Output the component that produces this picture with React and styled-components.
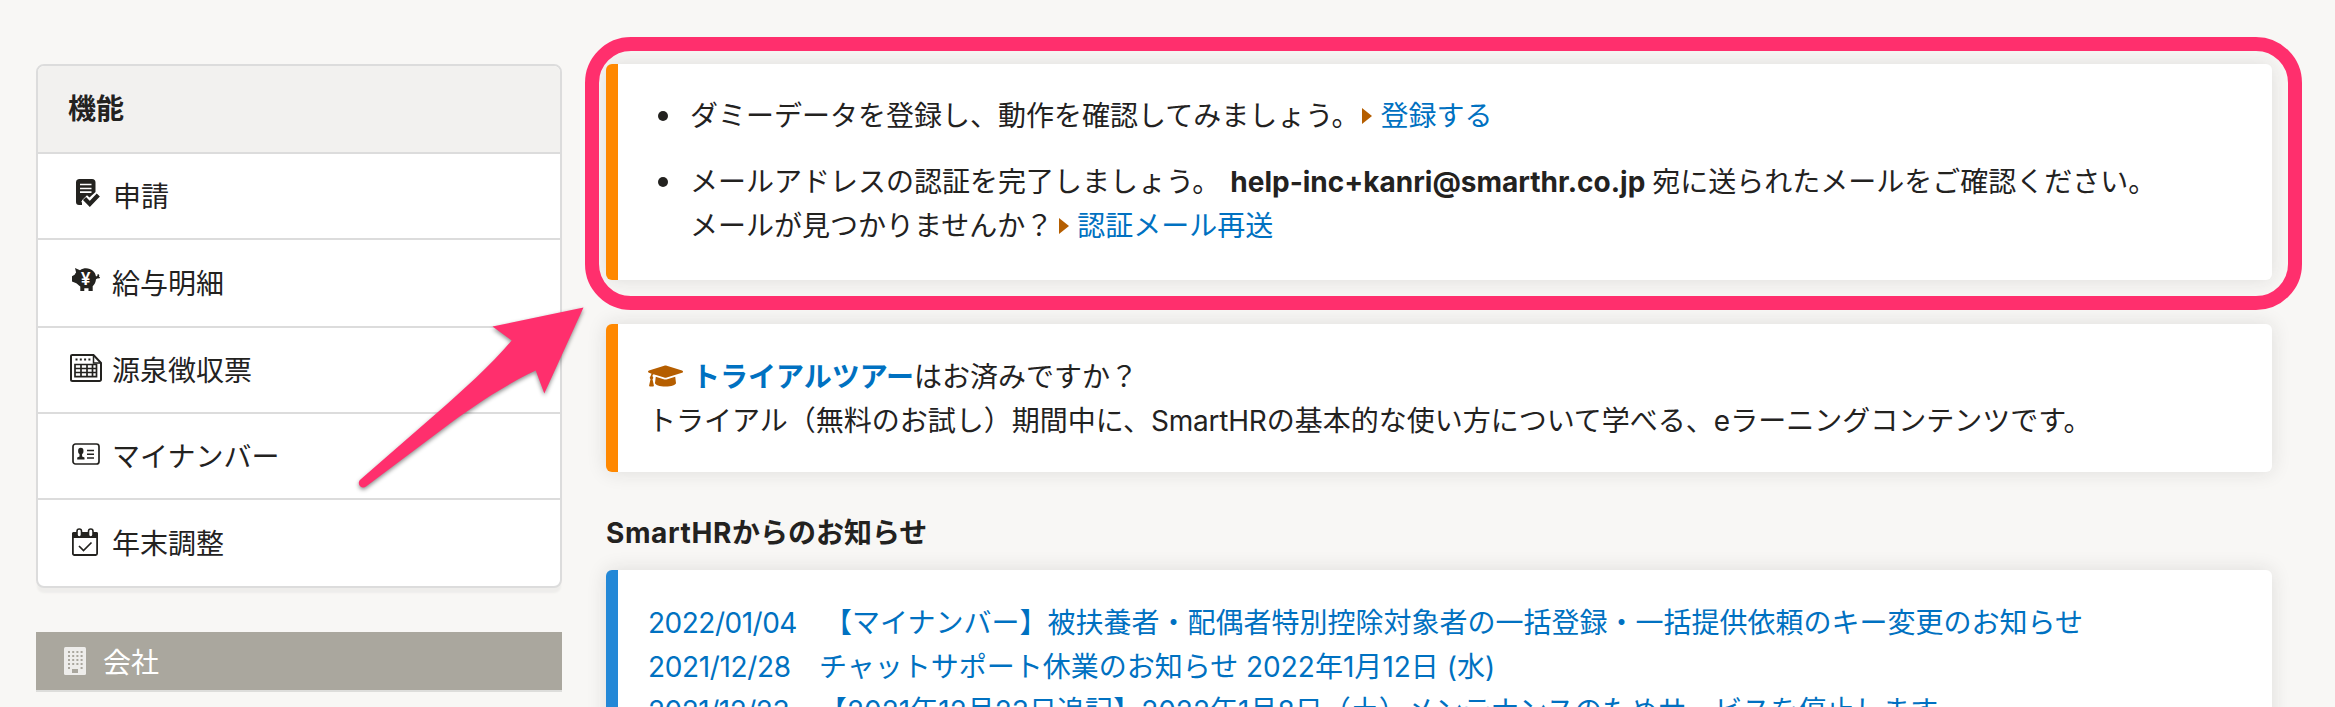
import React from 'react';
import styled, { createGlobalStyle } from 'styled-components';
import { FaGraduationCap } from 'react-icons/fa';

const GlobalStyle = createGlobalStyle`
  * { box-sizing: border-box; }
  body {
    margin: 0;
    background: #f8f7f5;
    color: #23221f;
    font-family: "Noto Sans CJK JP", sans-serif;
    font-size: 28px;
    line-height: 44px;
  }
`;

const Page = styled.div`
  position: relative;
  display: flex;
  gap: 44px;
  width: 2335px;
  height: 707px;
  padding: 64px 63px 0 36px;
  overflow: hidden;
`;

const Sidebar = styled.aside`
  display: flex;
  flex-direction: column;
  gap: 44px;
  width: 526px;
  flex: none;
`;

const Menu = styled.nav`
  border: 2px solid #dcdcdc;
  border-radius: 8px;
  background: #fff;
  box-shadow: 0 6px 2px -1px #eeedeb;
  overflow: hidden;
`;

const MenuTitle = styled.h2`
  display: flex;
  align-items: center;
  height: 86px;
  margin: 0;
  padding: 0 30px 5px;
  background: #f2f1ef;
  font-size: 28px;
  font-weight: 700;
`;

const MenuItem = styled.a`
  display: flex;
  align-items: center;
  height: ${(p) => p.$height}px;
  padding: 0 0 2px 32px;
  border-top: 2px solid #dcdcdc;
`;

const MenuIcon = styled.span`
  display: flex;
  width: ${(p) => p.$width || 42}px;
  margin-bottom: ${(p) => p.$lift || 0}px;
  flex: none;

  svg { display: block; overflow: visible; }
`;

const CompanyBar = styled.div`
  display: flex;
  align-items: center;
  height: 60px;
  padding-left: 28px;
  border-bottom: 2px solid #dddddb;
  background: #aaa79e;
  color: #fff;
`;

const CompanyIcon = styled.svg`
  margin-right: 17px;
`;

const Main = styled.main`
  display: flex;
  flex-direction: column;
  flex: 1;
  min-width: 0;
  height: 720px;
`;

const Card = styled.section`
  position: relative;
  flex: none;
  height: ${(p) => p.$height}px;
  margin-bottom: ${(p) => p.$after || 0}px;
  padding: ${(p) => p.$top}px 30px 0;
  border-left: 12px solid ${(p) => p.$accent};
  border-radius: 6px;
  background: #fff;
  box-shadow: 0 0 20px rgba(35, 34, 31, 0.12);
  white-space: nowrap;
`;

const Highlight = styled.div`
  position: absolute;
  top: -27px;
  left: -33px;
  width: 1717px;
  height: 273px;
  border: 14px solid #ff2f6d;
  border-radius: 46px;
  z-index: 2;
`;

const TaskList = styled.ul`
  display: flex;
  flex-direction: column;
  gap: 22px;
  margin: 0;
  padding: 0;
  list-style: none;
`;

const Task = styled.li`
  display: flex;

  &::before {
    content: '';
    flex: none;
    width: 10px;
    height: 10px;
    margin: 19px 22px 0 10px;
    border-radius: 50%;
    background: #23221f;
  }
`;

const Line = styled.div`
  height: 44px;
`;

const Link = styled.a`
  color: #0071c1;
  font-weight: ${(p) => (p.$bold ? 700 : 400)};
`;

const Caret = styled.span`
  display: inline-block;
  margin: 0 ${(p) => p.$after}px 0 ${(p) => p.$before}px;
  border-left: 10px solid #b55e00;
  border-top: 8px solid transparent;
  border-bottom: 8px solid transparent;
  vertical-align: 2px;
`;

const Latin = styled.span`
  font-family: Inter, sans-serif;
  line-height: 1;
  font-weight: ${(p) => p.$weight || 400};
  letter-spacing: ${(p) => p.$track || 0}px;
`;

const Email = styled(Latin)`
  margin: 0 7px 0 10px;
`;

const Cap = styled(FaGraduationCap)`
  width: 35px;
  height: 28px;
  margin-right: 9px;
  color: #b55e00;
  vertical-align: -3px;
`;

const SectionTitle = styled.h2`
  flex: none;
  height: 44px;
  margin: 0 0 17px;
  font-size: 28px;
  font-weight: 700;
`;

const News = styled.a`
  display: flex;
  align-items: baseline;
  height: 44px;
  color: #0071c1;
  white-space: pre;
`;

const NewsDate = styled(Latin)`
  width: ${(p) => p.$width}px;
  flex: none;
`;

const Pointer = styled.svg`
  position: absolute;
  top: 296px;
  left: 350px;
  z-index: 3;
  filter: drop-shadow(0 2px 2px rgba(0, 0, 0, 0.45));
`;

const INK = '#23221f';

const RequestIcon = () => (
  <svg width="32" height="30" viewBox="0 0 32 30">
    <path fill={INK} d="M9 0h13a3.500 3.500 0 0 1 3.500 3.500V13l-6 5.500-2.500-2.200-5 5V26H9a3 3 0 0 1-3-3V3.500A3.500 3.500 0 0 1 9 0z" />
    <path d="M10 5.500h11.500M10 9.500h11.500M10 13.200h11.500" stroke="#fff" strokeWidth="1.700" />
    <path d="M14 20l6 6 9.500-10" fill="none" stroke="#fff" strokeWidth="8" />
    <path d="M14.500 19.500l5.300 5.500 8.500-9" fill="none" stroke={INK} strokeWidth="4.300" />
  </svg>
);

const PiggyIcon = () => (
  <svg width="32" height="24" viewBox="0 0 32 24">
    <path fill={INK} d="M5 0l5 2.200C12 .8 14 .2 16 .2c5.500 0 9.500 3.800 10 8.300l1.500-.8c-.6-1 .5-2 1.400-1.100.6.8.4 1.500 0 2.100l1.200.6-.5 1-2.300.1-1.300.8c-.2 2.800-1.500 5.400-3.300 7V23h-4.200v-2.700h-4.200V23h-4v-4.500C8.500 17 7 15.800 6.300 15.200L2 13.500V8.300l2.600-1.500c.4-1 .9-1.700 1.500-2.400z" />
    <text x="15.700" y="17.200" fill="#fff" fontFamily="Inter, sans-serif" fontSize="17.500" fontWeight="600" textAnchor="middle">¥</text>
  </svg>
);

const SheetIcon = () => (
  <svg width="32" height="28" viewBox="0 0 32 28" fill="none" stroke={INK}>
    <path d="M1.500 1h22l7.500 8v16.500a1.500 1.500 0 0 1-1.500 1.500H2.500A1.500 1.500 0 0 1 1 25.500V2a1 1 0 0 1 1-1z" strokeWidth="2" />
    <path d="M23.500 1v8h7.500" strokeWidth="1.500" />
    <path d="M5.500 5.500h15.500" strokeWidth="2" strokeDasharray="2 2.300" />
    <path d="M5 10.500h21.500v12.200H5zM5 14.500h21.500M5 18.500h21.500M11 10v12.500M17 10v12.500M22.500 10v12.500" strokeWidth="1.700" />
  </svg>
);

const CardIcon = () => (
  <svg width="32" height="22" viewBox="0 0 32 22">
    <rect x="3" y="1" width="26" height="20" rx="2.500" fill="none" stroke={INK} strokeWidth="1.700" />
    <ellipse cx="10.800" cy="8" rx="2.700" ry="3.200" fill={INK} />
    <path fill={INK} d="M9.500 10h2.600v3.600l2.400 1v2H7.200v-2l2.300-1z" />
    <path d="M17 7.500h7M17 11.300h7M17 15h7" stroke={INK} strokeWidth="1.600" />
  </svg>
);

const CalendarIcon = () => (
  <svg width="32" height="28" viewBox="0 0 32 28">
    <rect x="2.900" y="5" width="24.200" height="22" rx="1.500" fill="#fff" stroke={INK} strokeWidth="1.800" />
    <path fill={INK} d="M2 5.500A1.500 1.500 0 0 1 3.500 4h23A1.500 1.500 0 0 1 28 5.500V10H2z" />
    <rect x="7" y="1" width="4.500" height="8" rx="2.200" fill="#fff" stroke={INK} strokeWidth="1.600" />
    <rect x="18.500" y="1" width="4.500" height="8" rx="2.200" fill="#fff" stroke={INK} strokeWidth="1.600" />
    <path d="M9 18l4.500 4.500 8-8" fill="none" stroke={INK} strokeWidth="1.700" />
  </svg>
);

const BuildingIcon = () => (
  <CompanyIcon width="22" height="28" viewBox="0 0 22 28">
    <rect width="22" height="28" rx="1.500" fill="#eeedeb" />
    <path d="M4 5h15M4 9h15M4 13h15M4 17h15" stroke="#aaa79e" strokeWidth="2" strokeDasharray="2 2.200" />
    <path d="M4 21h2M16.600 21h2" stroke="#aaa79e" strokeWidth="2" />
    <path d="M8 22h6v4H8z" fill="#aaa79e" />
  </CompanyIcon>
);

const menu = [
  { label: '申請', icon: RequestIcon, height: 86, width: 43, lift: 2 },
  { label: '給与明細', icon: PiggyIcon, height: 88, lift: 4 },
  { label: '源泉徴収票', icon: SheetIcon, height: 86, lift: 2 },
  { label: 'マイナンバー', icon: CardIcon, height: 86, lift: 2 },
  { label: '年末調整', icon: CalendarIcon, height: 88 },
];

export default function App() {
  return (
    <Page>
      <GlobalStyle />
      <Sidebar>
        <Menu>
          <MenuTitle>機能</MenuTitle>
          {menu.map(({ label, icon: Icon, height, width, lift }) => (
            <MenuItem key={label} $height={height}>
              <MenuIcon $width={width} $lift={lift}><Icon /></MenuIcon>
              {label}
            </MenuItem>
          ))}
        </Menu>
        <CompanyBar>
          <BuildingIcon />
          会社
        </CompanyBar>
      </Sidebar>

      <Main>
        <Card $accent="#ff8800" $height={216} $top={28} $after={44}>
          <TaskList>
            <Task>
              <Line>
                ダミーデータを登録し、動作を確認してみましょう。<Caret $before={3} $after={8} /><Link>登録する</Link>
              </Line>
            </Task>
            <Task>
              <div>
                <Line>
                  メールアドレスの認証を完了しましょう。<Email $weight={700}>help-inc+kanri@smarthr.co.jp</Email>宛に送られたメールをご確認ください。
                </Line>
                <Line>
                  メールが見つかりませんか？<Caret $before={6} $after={8} /><Link>認証メール再送</Link>
                </Line>
              </div>
            </Task>
          </TaskList>
          <Highlight />
        </Card>

        <Card $accent="#ff8800" $height={148} $top={29} $after={37}>
          <Line>
            <Cap /><Link $bold>トライアルツアー</Link>はお済みですか？
          </Line>
          <Line>
            トライアル（無料のお試し）期間中に、<Latin $track={-0.2}>SmartHR</Latin>の基本的な使い方について学べる、<Latin>e</Latin>ラーニングコンテンツです。
          </Line>
        </Card>

        <SectionTitle><Latin $weight={700} $track={0.6}>SmartHR</Latin>からのお知らせ</SectionTitle>

        <Card $accent="#2388d7" $height={240} $top={29}>
          <News>
            <NewsDate $width={176} $track={-0.5}>2022/01/04</NewsDate>
            【マイナンバー】被扶養者・配偶者特別控除対象者の一括登録・一括提供依頼のキー変更のお知らせ
          </News>
          <News>
            <NewsDate $width={171} $track={-0.35}>2021/12/28</NewsDate>
            チャットサポート休業のお知らせ<Latin>{' '}2022</Latin>年<Latin>1</Latin>月<Latin>12</Latin>日<Latin>{' '}(</Latin>水<Latin>)</Latin>
          </News>
          <News>
            <NewsDate $width={171} $track={-0.5}>2021/12/23</NewsDate>
            【<Latin>2021</Latin>年<Latin>12</Latin>月<Latin>23</Latin>日追記】<Latin>2022</Latin>年<Latin>1</Latin>月<Latin>8</Latin>日（土）メンテナンスのためサービスを停止します
          </News>
        </Card>
      </Main>

      <Pointer width="246" height="200" viewBox="350 296 246 200">
        <path
          fill="#ff2f6d"
          d="M583.500 307.500L492.500 326.500L511.700 340.500C490 366 462 391 438 412L360.500 479.500A4.200 4.200 0 0 0 366 486.500L450 423.500C478 403 509 383 535.700 370.500L544.300 393.500Z"
        />
      </Pointer>
    </Page>
  );
}
